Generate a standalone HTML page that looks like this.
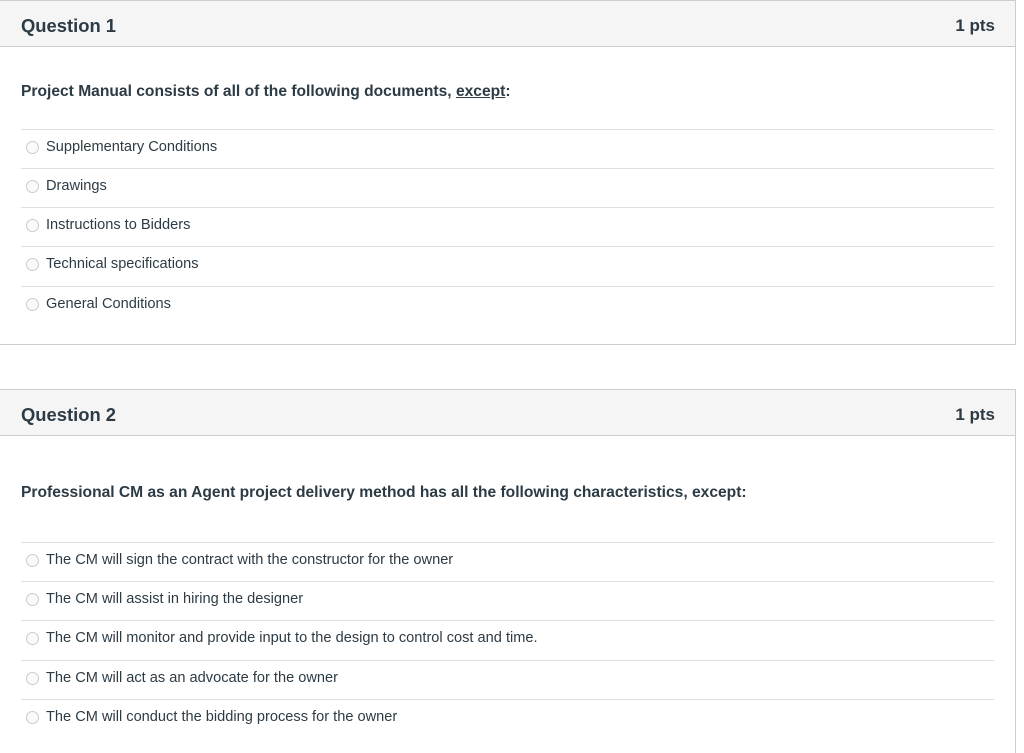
<!DOCTYPE html>
<html style="height:753px;overflow:hidden"><head><meta charset="utf-8"><style>
*{margin:0;padding:0;box-sizing:border-box}
body{width:1024px;height:753px;background:#fff;font-family:"Liberation Sans",sans-serif;color:#2d3b45;position:relative;overflow:hidden}
.box{position:absolute;left:-1px;width:1017px;border:1px solid #c7cdd1;background:#fff}
.hdr{position:absolute;left:0;right:0;top:0;height:46px;background:#f5f5f5;border-bottom:1px solid #c7cdd1}
.hdr .t{position:absolute;left:21px;top:14px;font-size:18.4px;font-weight:bold;color:#2d3b45}
.hdr .p{position:absolute;right:20px;top:15px;font-size:17px;font-weight:bold;color:#2d3b45}
.q{position:absolute;left:21px;font-size:15.6px;font-weight:bold;color:#2d3b45}
.opt{position:absolute;left:21px;width:973px;height:39px;border-top:1px solid #dde1e4;font-size:14.6px}
.opt span{position:absolute;left:25px;top:9px}
.opt i{position:absolute;left:5px;top:11px;width:13px;height:13px;border:1px solid #c8ccd0;border-radius:50%;background:#fafafa}
</style></head><body>
<div class="box" style="top:0;height:345px">
 <div class="hdr"><div class="t">Question 1</div><div class="p">1 pts</div></div>
 <div class="q" style="top:82px">Project Manual consists of all of the following documents, <u>except</u>:</div>
 <div class="opt" style="top:128px"><i></i><span>Supplementary Conditions</span></div>
 <div class="opt" style="top:167px"><i></i><span>Drawings</span></div>
 <div class="opt" style="top:206px"><i></i><span>Instructions to Bidders</span></div>
 <div class="opt" style="top:245px"><i></i><span>Technical specifications</span></div>
 <div class="opt" style="top:285px"><i></i><span>General Conditions</span></div>
</div>
<div class="box" style="top:389px;height:364px;border-bottom:none">
 <div class="hdr"><div class="t">Question 2</div><div class="p">1 pts</div></div>
 <div class="q" style="top:94px">Professional CM as an Agent project delivery method has all the following characteristics, except:</div>
 <div class="opt" style="top:152px"><i></i><span>The CM will sign the contract with the constructor for the owner</span></div>
 <div class="opt" style="top:191px"><i></i><span>The CM will assist in hiring the designer</span></div>
 <div class="opt" style="top:230px"><i></i><span>The CM will monitor and provide input to the design to control cost and time.</span></div>
 <div class="opt" style="top:270px"><i></i><span>The CM will act as an advocate for the owner</span></div>
 <div class="opt" style="top:309px"><i></i><span>The CM will conduct the bidding process for the owner</span></div>
</div>
</body></html>
